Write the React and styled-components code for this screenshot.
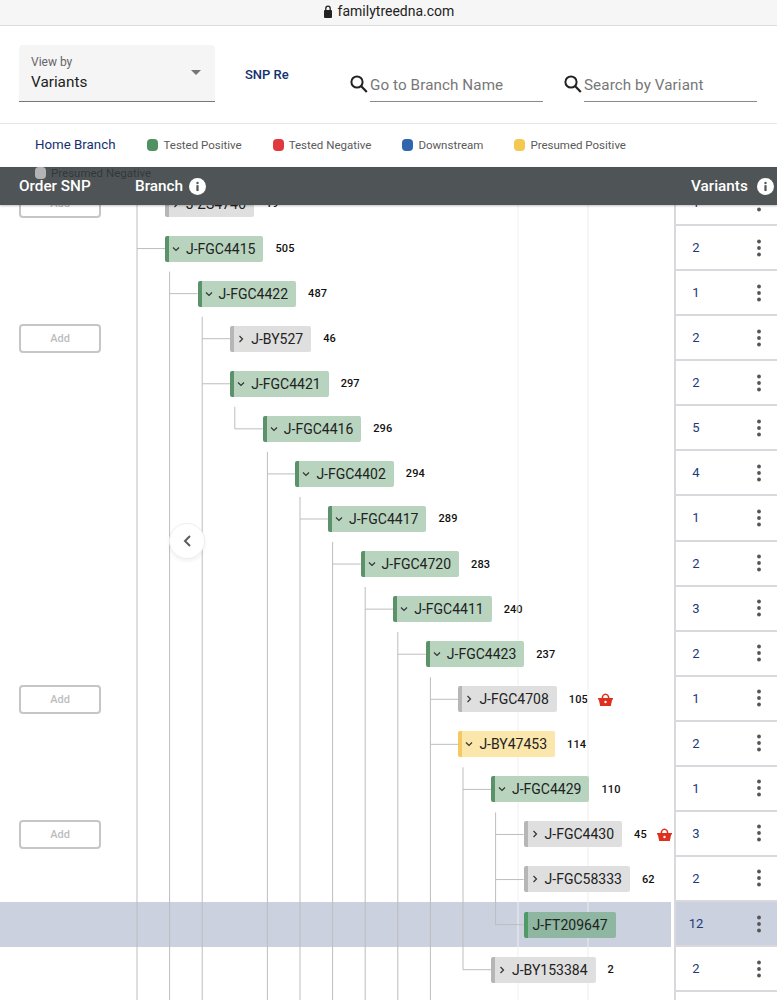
import React from "react";
import styled, { createGlobalStyle } from "styled-components";

const ROW_H = 45.07;
const RAIL_X = 137;
const STEP = 32.6;

const rows = [
  { name: "J-ZS4746", depth: 0, kind: "gray", count: 19, variants: 1, add: true },
  { name: "J-FGC4415", depth: 0, kind: "green", count: 505, variants: 2, open: true },
  { name: "J-FGC4422", depth: 1, kind: "green", count: 487, variants: 1, open: true },
  { name: "J-BY527", depth: 2, kind: "gray", count: 46, variants: 2, add: true },
  { name: "J-FGC4421", depth: 2, kind: "green", count: 297, variants: 2, open: true },
  { name: "J-FGC4416", depth: 3, kind: "green", count: 296, variants: 5, open: true },
  { name: "J-FGC4402", depth: 4, kind: "green", count: 294, variants: 4, open: true },
  { name: "J-FGC4417", depth: 5, kind: "green", count: 289, variants: 1, open: true },
  { name: "J-FGC4720", depth: 6, kind: "green", count: 283, variants: 2, open: true },
  { name: "J-FGC4411", depth: 7, kind: "green", count: 240, variants: 3, open: true },
  { name: "J-FGC4423", depth: 8, kind: "green", count: 237, variants: 2, open: true },
  { name: "J-FGC4708", depth: 9, kind: "gray", count: 105, variants: 1, add: true, basket: true },
  { name: "J-BY47453", depth: 9, kind: "yellow", count: 114, variants: 2, open: true },
  { name: "J-FGC4429", depth: 10, kind: "green", count: 110, variants: 1, open: true },
  { name: "J-FGC4430", depth: 11, kind: "gray", count: 45, variants: 3, add: true, basket: true },
  { name: "J-FGC58333", depth: 11, kind: "gray", count: 62, variants: 2 },
  { name: "J-FT209647", depth: 11, kind: "current", variants: 12, selected: true, leaf: true },
  { name: "J-BY153384", depth: 10, kind: "gray", count: 2, variants: 2 },
  { depth: 0, variants: null, blank: true },
];

// [depth, row the rail starts under, row it ends on (null runs off the page)]
const rails = [
  [0, -1, null],
  [1, 1, null],
  [2, 2, null],
  [3, 4, 5],
  [4, 5, null],
  [5, 6, null],
  [6, 7, null],
  [7, 8, null],
  [8, 9, null],
  [9, 10, null],
  [10, 12, 17],
  [11, 13, 16],
];

const kinds = {
  green: { bg: "#b8d4bf", bar: "#5c9269" },
  gray: { bg: "#dfdfdf", bar: "#b6b6b6" },
  yellow: { bg: "#fbe6ab", bar: "#f4c862" },
  current: { bg: "#8fb6a1", bar: "#4f9a66" },
};

const GlobalStyle = createGlobalStyle`
  html, body {
    margin: 0;
    padding: 0;
    background: #fff;
    font-family: Roboto, "Liberation Sans", sans-serif;
  }
  * { box-sizing: border-box; }
`;

const Page = styled.div`
  height: 1000px;
  overflow: hidden;
  display: flex;
  flex-direction: column;
`;

const BrowserBar = styled.div`
  height: 26px;
  flex: none;
  display: flex;
  align-items: center;
  justify-content: center;
  gap: 5px;
  padding: 0 0 3px;
  background: #f6f6f6;
  border-bottom: 1px solid #dcdcdc;
  font-size: 14px;
  color: #222;
`;

const Toolbar = styled.div`
  height: 98px;
  flex: none;
  display: flex;
  padding: 19px 0 0 19px;
  border-bottom: 1px solid #e6e6e6;
`;

const Select = styled.div`
  position: relative;
  width: 196px;
  height: 57px;
  padding: 10px 12px 0;
  background: #f5f5f5;
  border-radius: 4px 4px 0 0;
  border-bottom: 1px solid #777;
`;

const SelectLabel = styled.div`
  font-size: 12px;
  line-height: 14px;
  color: #666;
`;

const SelectValue = styled.div`
  margin-top: 3px;
  font-size: 15.3px;
  line-height: 20px;
  color: #222;
`;

const Caret = styled.span`
  position: absolute;
  right: 14px;
  top: 25px;
  border-left: 5px solid transparent;
  border-right: 5px solid transparent;
  border-top: 5px solid #757575;
`;

const SnpLink = styled.a`
  width: 104px;
  margin-left: 30px;
  padding-top: 22px;
  font-size: 13px;
  font-weight: 500;
  color: #14306f;
`;

const SearchField = styled.div`
  width: 194px;
  margin-right: 20px;
  height: 57px;
  display: flex;
  align-items: flex-end;
`;

const SearchIcon = styled.svg`
  width: 20px;
  height: 20px;
  margin-bottom: 8px;
  margin-right: 1px;
  flex: none;
`;

const SearchText = styled.div`
  flex: 1;
  height: 33px;
  padding-top: 6px;
  font-size: 15.2px;
  line-height: 20px;
  letter-spacing: 0.1px;
  color: #777;
  border-bottom: 1px solid #8a8a8a;
`;

const Legend = styled.div`
  position: relative;
  z-index: 3;
  height: 43px;
  flex: none;
  width: 680px;
  padding: 14px 0 0 35px;
  display: flex;
  flex-wrap: wrap;
  align-content: flex-start;
  row-gap: 14px;
`;

const HomeLink = styled.a`
  font-size: 13.3px;
  line-height: 14px;
  color: #14306f;
  margin-right: 32px;
`;

const LegendItem = styled.div`
  display: flex;
  align-items: center;
  gap: 5px;
  height: 14px;
  margin-right: 31px;
  font-size: 11.5px;
  color: ${(p) => (p.$over ? "#33383a" : "#5a5a5a")};
`;

const Dot = styled.span`
  width: 11px;
  height: 12px;
  border-radius: 4px;
  background: ${(p) => p.$color};
`;

const Header = styled.div`
  position: relative;
  z-index: 2;
  height: 38px;
  flex: none;
  display: flex;
  align-items: center;
  background: #4f5557;
  color: #fff;
  font-size: 15.3px;
  font-weight: 500;
  box-shadow: 0 1px 2px rgba(0, 0, 0, 0.25);
`;

const HeaderCell = styled.div`
  display: flex;
  align-items: center;
  gap: ${(p) => p.$gap || 6}px;
  width: ${(p) => p.$width}px;
  padding-left: ${(p) => p.$pad || 0}px;
  flex: ${(p) => (p.$grow ? 1 : "none")};
`;

const Rows = styled.div`
  position: relative;
  z-index: 1;
  margin-top: -24px;
`;

const Lines = styled.svg`
  position: absolute;
  left: 0;
  top: 0;
  z-index: 1;
  pointer-events: none;
`;

const Row = styled.div`
  height: ${ROW_H}px;
  display: flex;
`;

const RowMain = styled.div`
  width: 671px;
  display: flex;
  align-items: center;
  background: ${(p) => (p.$selected ? "#cbd1df" : "transparent")};
`;

const OrderCell = styled.div`
  width: 136px;
  flex: none;
  padding-left: 19px;
`;

const AddButton = styled.button`
  display: block;
  width: 82px;
  height: 29px;
  padding: 0;
  background: #fff;
  border: 2px solid #c6c6c6;
  border-radius: 4px;
  font-family: inherit;
  font-size: 11px;
  font-weight: 500;
  color: #bdbdbd;
`;

const TreeCell = styled.div`
  flex: 1;
  display: flex;
  align-items: center;
  padding-left: ${(p) => 29 + p.$depth * STEP}px;
`;

const Node = styled.div`
  position: relative;
  z-index: 2;
  height: 26px;
  display: flex;
  align-items: center;
  padding: 0 8px 0 ${(p) => (p.$leaf ? 5 : 3)}px;
  background: ${(p) => kinds[p.$kind].bg};
  border-left: 4px solid ${(p) => kinds[p.$kind].bar};
  border-radius: 2px;
  font-size: 14px;
  white-space: nowrap;
  color: #222;
`;

const Chevron = styled.svg`
  width: 8px;
  height: 8px;
  margin-right: 6px;
  flex: none;
`;

const Count = styled.span`
  margin-left: 12px;
  font-size: 11px;
  font-weight: 500;
  letter-spacing: 0.1px;
  color: #111;
`;

const Basket = styled.svg`
  width: 15px;
  height: 13px;
  margin-left: 10px;
  flex: none;
`;

const VariantCell = styled.div`
  width: 103px;
  margin-left: 3px;
  padding-left: 7px;
  display: flex;
  align-items: center;
  justify-content: space-between;
  background: ${(p) => (p.$selected ? "#cbd1df" : "#fff")};
  border-left: 2px solid #d9d9dd;
  border-bottom: 2px solid #d9d9dd;
  font-size: 13px;
  color: #1c3a78;
`;

const VariantCount = styled.span`
  width: 26px;
  text-align: center;
`;

const Kebab = styled.svg`
  width: 4px;
  height: 18px;
  margin-right: 16px;
  flex: none;
`;

const BackButton = styled.button`
  position: absolute;
  z-index: 2;
  left: 169px;
  top: 342px;
  width: 36px;
  height: 36px;
  padding: 0;
  display: flex;
  align-items: center;
  justify-content: center;
  background: #fff;
  border: 1px solid #efefef;
  border-radius: 50%;
  box-shadow: 0 2px 4px rgba(0, 0, 0, 0.06);
`;

const Lock = () => (
  <svg width="10" height="13" viewBox="0 0 10 13">
    <rect x="1" y="5" width="8" height="8" rx="1" fill="#222" />
    <path d="M2.8 5.5V3.4a2.2 2.2 0 0 1 4.4 0v2.1" fill="none" stroke="#222" strokeWidth="1.3" />
  </svg>
);

const Magnifier = () => (
  <SearchIcon viewBox="0 0 20 20">
    <circle cx="8" cy="8" r="5.6" fill="none" stroke="#222" strokeWidth="2" />
    <path d="M12 12l5.8 6" stroke="#222" strokeWidth="2.2" />
  </SearchIcon>
);

const Info = () => (
  <svg width="17" height="17" viewBox="0 0 17 17">
    <circle cx="8.5" cy="8.5" r="8.5" fill="#fff" />
    <circle cx="8.5" cy="5" r="1.2" fill="#4f5557" />
    <rect x="7.4" y="7.2" width="2.2" height="5.8" fill="#4f5557" />
  </svg>
);

const BasketIcon = () => (
  <Basket viewBox="0 0 15 13">
    <path d="M4.3 5.5a3.2 4.2 0 0 1 6.4 0" fill="none" stroke="#de2f1f" strokeWidth="1.6" />
    <path d="M0 5h15v1.6h-.8L12.8 13H2.2L.8 6.6H0z" fill="#de2f1f" />
    <circle cx="7.5" cy="9" r="1.2" fill="#fff" />
  </Basket>
);

const NodeChevron = ({ open }) => (
  <Chevron viewBox="0 0 8 8">
    <path
      d={open ? "M1 2.5l3 3 3-3" : "M2.5 1l3 3-3 3"}
      fill="none"
      stroke="#333"
      strokeWidth="1.2"
    />
  </Chevron>
);

const TreeLines = () => {
  const height = rows.length * ROW_H;
  const center = (i) => i * ROW_H + 22.5;
  return (
    <Lines width="671" height={height}>
      <line x1="518" x2="518" y1="0" y2={height} stroke="#f0f0f0" />
      <line x1="588" x2="588" y1="0" y2={height} stroke="#ececec" />
      {rails.map(([depth, from, to]) => {
        const x = RAIL_X + depth * STEP;
        const y1 = from < 0 ? 0 : center(from) + 23;
        const y2 = to === null ? height : center(to);
        return <line key={depth} x1={x} x2={x} y1={y1} y2={y2} stroke="#bdbdbd" />;
      })}
      {rows.map((row, i) =>
        row.blank ? null : (
          <line
            key={row.name}
            x1={RAIL_X + row.depth * STEP}
            x2={RAIL_X + row.depth * STEP + 28}
            y1={center(i)}
            y2={center(i)}
            stroke="#bdbdbd"
          />
        )
      )}
    </Lines>
  );
};

const TreeRow = ({ row }) => (
  <Row>
    <RowMain $selected={row.selected}>
      <OrderCell>{row.add && <AddButton>Add</AddButton>}</OrderCell>
      {!row.blank && (
        <TreeCell $depth={row.depth}>
          <Node $kind={row.kind} $leaf={row.leaf}>
            {!row.leaf && <NodeChevron open={row.open} />}
            {row.name}
          </Node>
          {row.count !== undefined && <Count>{row.count}</Count>}
          {row.basket && <BasketIcon />}
        </TreeCell>
      )}
    </RowMain>
    <VariantCell $selected={row.selected}>
      <VariantCount>{row.variants}</VariantCount>
      {!row.blank && (
        <Kebab viewBox="0 0 4 18">
          <circle cx="2" cy="2.5" r="1.9" fill="#555" />
          <circle cx="2" cy="9" r="1.9" fill="#555" />
          <circle cx="2" cy="15.5" r="1.9" fill="#555" />
        </Kebab>
      )}
    </VariantCell>
  </Row>
);

export default function App() {
  return (
    <Page>
      <GlobalStyle />
      <BrowserBar>
        <Lock />
        familytreedna.com
      </BrowserBar>
      <Toolbar>
        <Select>
          <SelectLabel>View by</SelectLabel>
          <SelectValue>Variants</SelectValue>
          <Caret />
        </Select>
        <SnpLink>SNP Re</SnpLink>
        <SearchField>
          <Magnifier />
          <SearchText>Go to Branch Name</SearchText>
        </SearchField>
        <SearchField>
          <Magnifier />
          <SearchText>Search by Variant</SearchText>
        </SearchField>
      </Toolbar>
      <Legend>
        <HomeLink>Home Branch</HomeLink>
        <LegendItem>
          <Dot $color="#4f9161" />
          Tested Positive
        </LegendItem>
        <LegendItem>
          <Dot $color="#e0383e" />
          Tested Negative
        </LegendItem>
        <LegendItem>
          <Dot $color="#2f66ad" />
          Downstream
        </LegendItem>
        <LegendItem>
          <Dot $color="#f5c84f" />
          Presumed Positive
        </LegendItem>
        <LegendItem $over>
          <Dot $color="#b4b4b4" />
          Presumed Negative
        </LegendItem>
      </Legend>
      <Header>
        <HeaderCell $width={135} $pad={19}>
          Order SNP
        </HeaderCell>
        <HeaderCell $grow>
          Branch
          <Info />
        </HeaderCell>
        <HeaderCell $width={86} $gap={9}>
          Variants
          <Info />
        </HeaderCell>
      </Header>
      <Rows>
        <TreeLines />
        {rows.map((row, i) => (
          <TreeRow key={i} row={row} />
        ))}
        <BackButton>
          <svg width="10" height="14" viewBox="0 0 10 14">
            <path d="M8 2L3 7l5 5" fill="none" stroke="#5c5c5c" strokeWidth="2" />
          </svg>
        </BackButton>
      </Rows>
    </Page>
  );
}
